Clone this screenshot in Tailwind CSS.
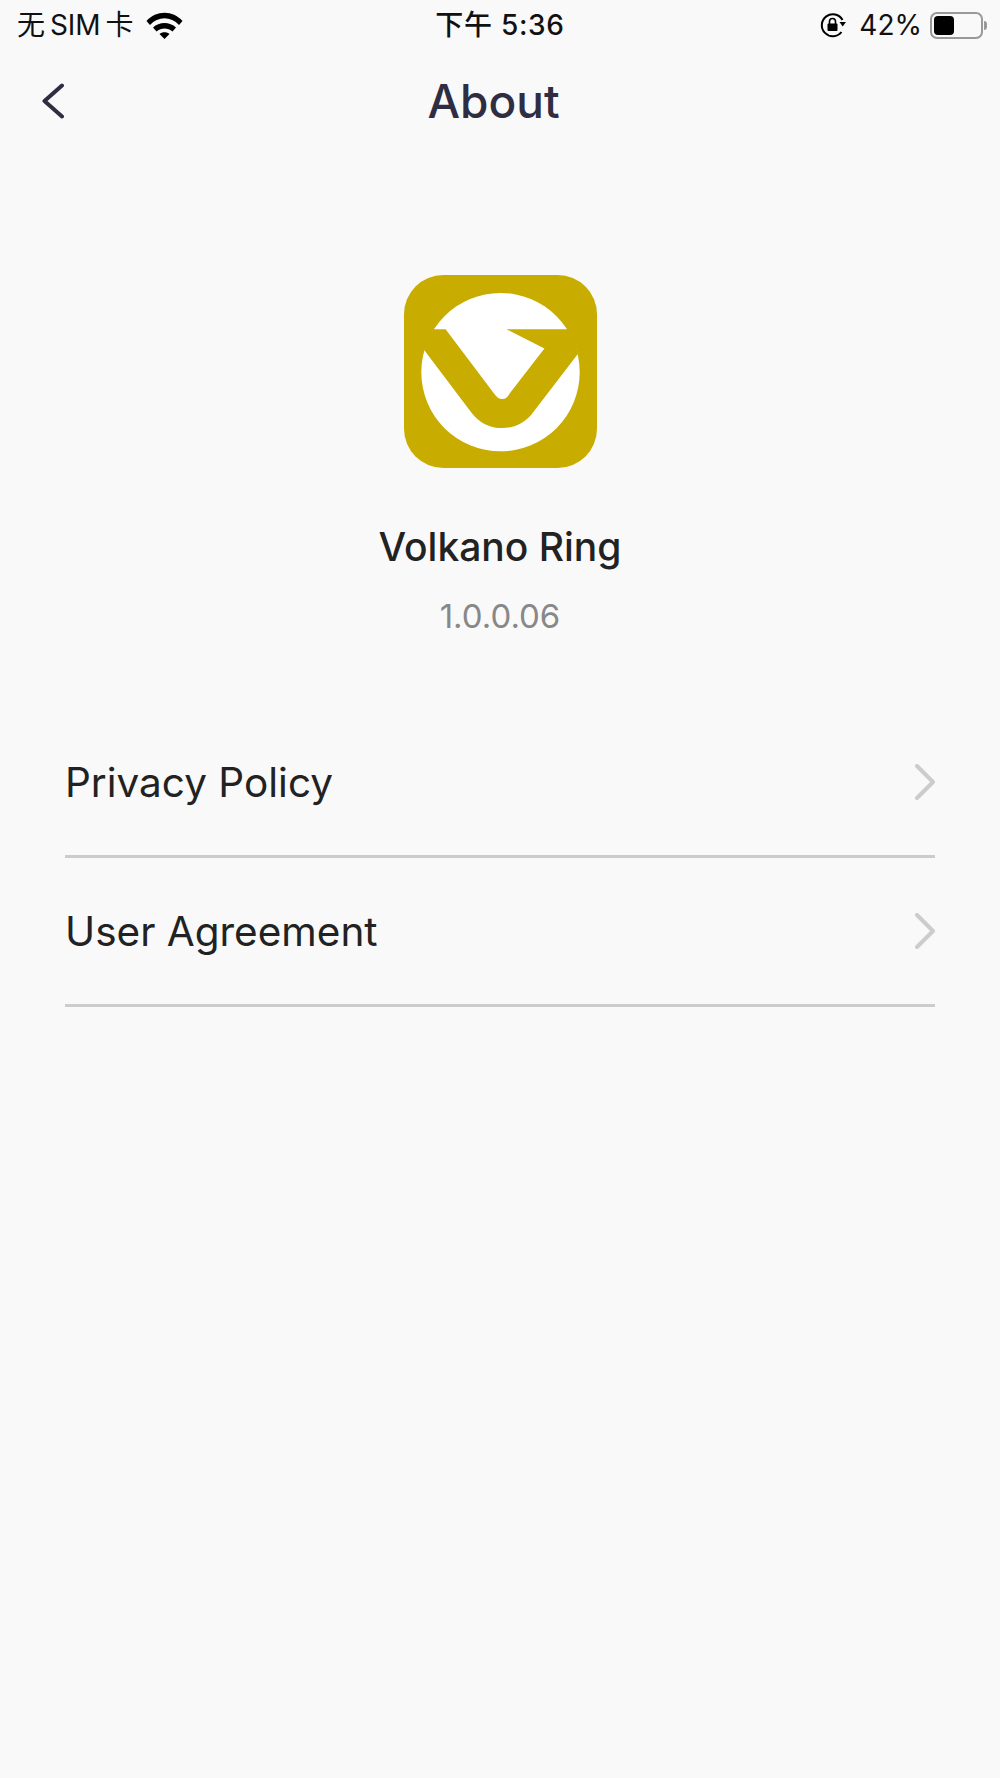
<!DOCTYPE html>
<html lang="en">
  <head>
    <meta charset="UTF-8" />
    <meta name="viewport" content="width=device-width, initial-scale=1.0" />
    <script src="https://cdn.jsdelivr.net/npm/@tailwindcss/browser@4"></script>
    <title>About</title>
  </head>
  <body class="bg-[#f9f9f9] font-['Inter','Noto_Sans_CJK_SC',sans-serif]">
    <div class="h-[1778px] w-[1000px] overflow-hidden">
      <!-- Status bar -->
      <div class="flex h-[50px] items-center justify-between pl-[17px] pr-[13px] text-[28px] text-[#111]">
        <div class="flex w-[298px] items-center">
          <span class="leading-none [word-spacing:-3px]">无 SIM 卡</span>
          <svg class="ml-[12px]" width="37" height="28" viewBox="0 0 37 28">
            <path d="M0.5 10 C10 -1 27 -1 36.5 10 L33 14 C25 5 12 5 4 14 Z" fill="#000" />
            <path d="M7 16.5 C13 10.5 24 10.5 30 16.5 L26.5 20.5 C22 16.5 15 16.5 10.5 20.5 Z" fill="#000" />
            <path d="M13.5 23 C16 20.8 21 20.8 23.5 23 L18.5 28 Z" fill="#000" />
          </svg>
        </div>
        <span class="font-medium leading-none tracking-[0.7px]">下午 5:36</span>
        <div class="flex w-[302px] items-center justify-end">
          <svg width="26" height="26" viewBox="0 0 26 26">
            <path d="M21.5 20 A11 11 0 1 1 22.5 8" fill="none" stroke="#000" stroke-width="2" />
            <path d="M19.5 10 H26 L22.7 14.5 Z" fill="#000" />
            <rect x="7.5" y="11.5" width="10" height="7.5" rx="1" fill="#000" />
            <path d="M9.5 12 V9.5 A3 3 0 0 1 15.5 9.5 V12" fill="none" stroke="#000" stroke-width="1.6" />
          </svg>
          <span class="ml-[13px] leading-none">42%</span>
          <div class="ml-[8px] flex h-[27px] w-[53px] items-center rounded-[7px] border-2 border-[#999] p-[2px]">
            <div class="h-full w-[20px] rounded-[4px] bg-black"></div>
          </div>
          <div class="ml-[1px] h-[9px] w-[3px] rounded-r-full bg-[#999]"></div>
        </div>
      </div>

      <!-- Nav -->
      <div class="flex h-[102px] items-center justify-between pl-[41px] pr-[54px]">
        <svg width="24" height="36" viewBox="0 0 24 36">
          <path d="M21 2.5 L3.5 18 L21 33.5" fill="none" stroke="#2f2d42" stroke-width="4" stroke-linecap="round" stroke-linejoin="round" />
        </svg>
        <h1 class="text-[46px] font-medium leading-none text-[#2f2d42]">About</h1>
        <div class="w-[24px]"></div>
      </div>

      <!-- App info -->
      <div class="mt-[123px] flex flex-col items-center">
        <svg width="193" height="193" viewBox="40 45 580 580">
          <rect x="40" y="45" width="580" height="580" rx="118" fill="#c8ac00" />
          <circle cx="330" cy="337" r="238" fill="#fff" />
          <path d="M120 208 H165 L310 400 C318 412 326 418 335 418 C345 418 352 412 358 400 L462 266 L348 208 H540 L563 282 L430 455 C405 490 370 505 335 505 C300 505 265 490 240 455 L100 270 Z" fill="#c8ac00" />
        </svg>
        <p class="mt-[56px] text-[39px] font-medium leading-[46px] text-[#222]">Volkano Ring</p>
        <p class="mt-[23px] text-[33px] leading-[46px] text-[#888]">1.0.0.06</p>
      </div>

      <!-- Links -->
      <ul class="mt-[70px] px-[65px]">
        <li class="flex h-[149px] items-center justify-between border-b-[3px] border-[#ccc]">
          <span class="pt-[2px] text-[40.5px] leading-none text-[#222]">Privacy Policy</span>
          <svg width="20" height="36" viewBox="0 0 20 36">
            <path d="M2 2 L18 18 L2 34" fill="none" stroke="#ccc" stroke-width="4" stroke-linecap="round" stroke-linejoin="round" />
          </svg>
        </li>
        <li class="flex h-[149px] items-center justify-between border-b-[3px] border-[#ccc]">
          <span class="pt-[2px] text-[40.5px] leading-none text-[#222]">User Agreement</span>
          <svg width="20" height="36" viewBox="0 0 20 36">
            <path d="M2 2 L18 18 L2 34" fill="none" stroke="#ccc" stroke-width="4" stroke-linecap="round" stroke-linejoin="round" />
          </svg>
        </li>
      </ul>
    </div>
  </body>
</html>
